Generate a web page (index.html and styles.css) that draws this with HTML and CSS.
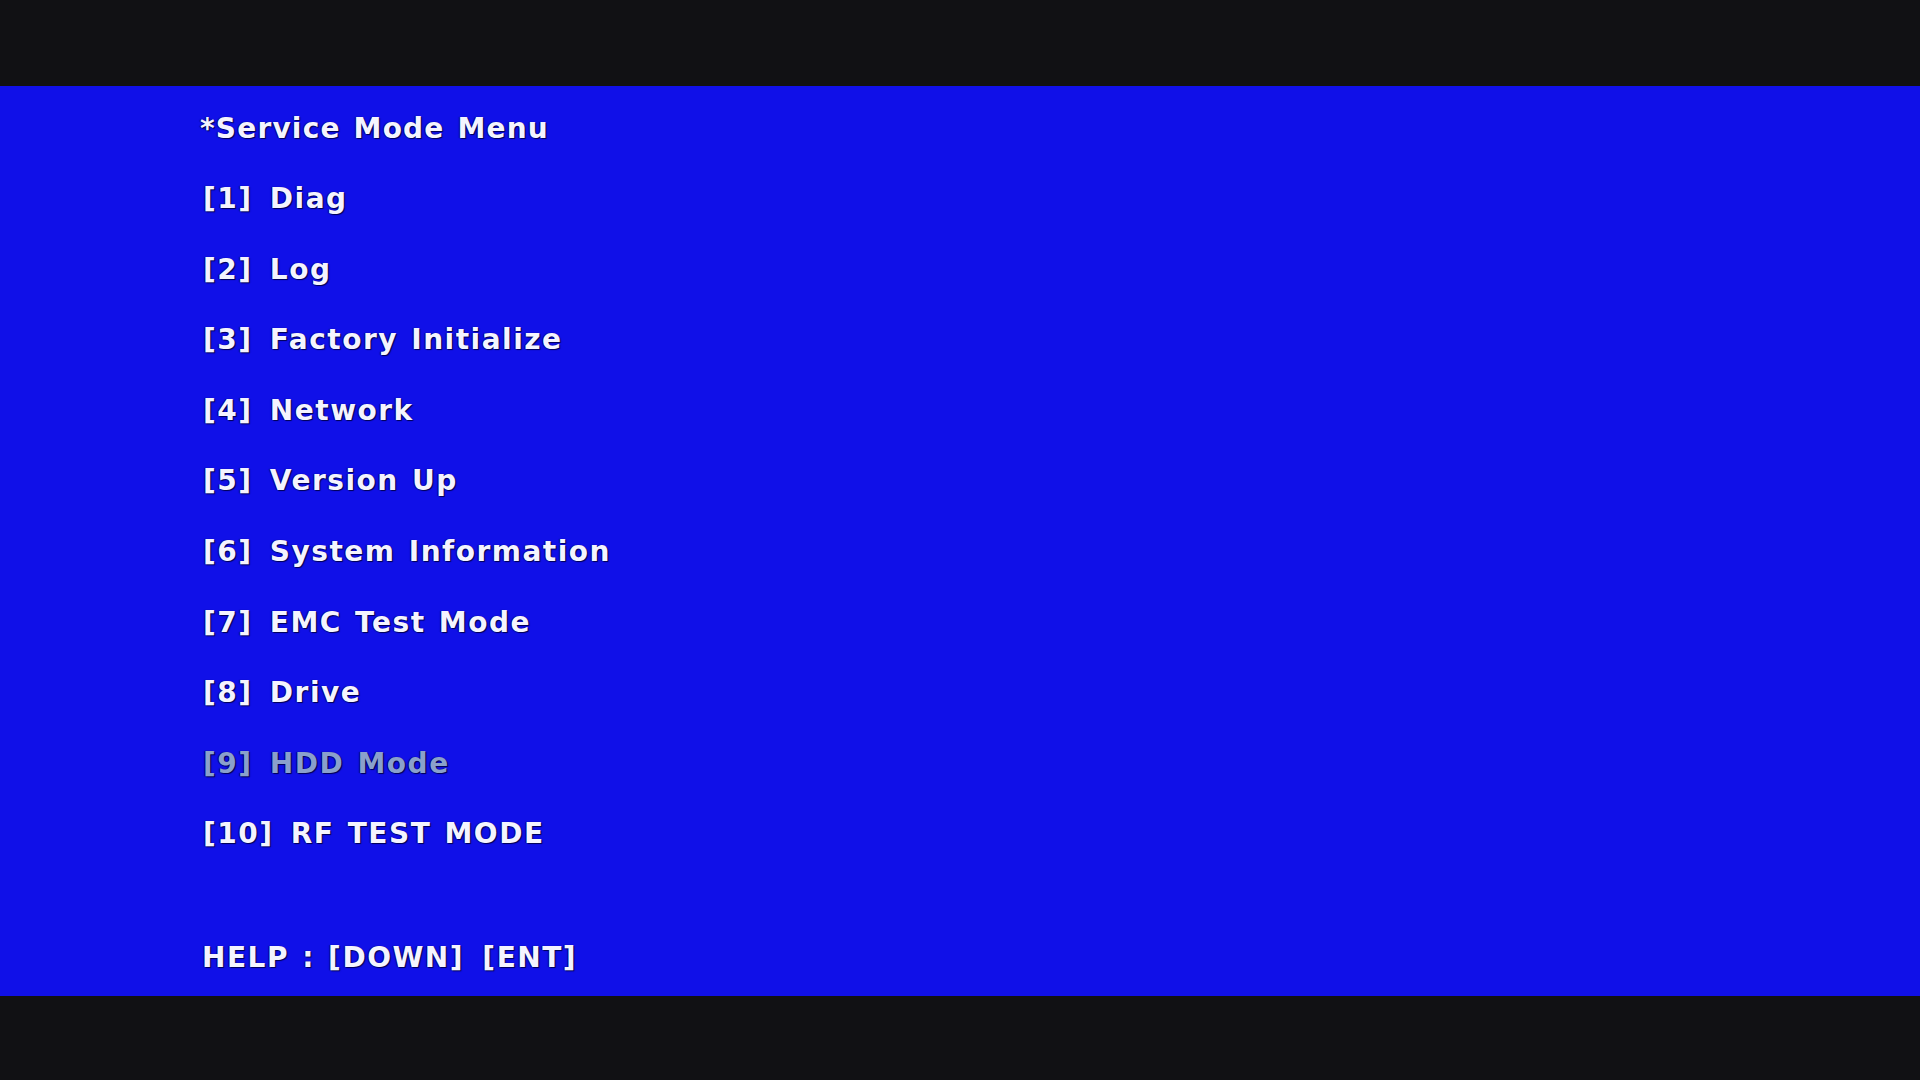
FILE: index.html
```html
<!DOCTYPE html>
<html>
<head>
<meta charset="utf-8">
<link rel="stylesheet" href="styles.css">
</head>
<body>
<div class="bar"></div>
<main class="screen">
  <div class="title">*Service Mode Menu</div>
  <ul class="menu">
    <li><span class="key">[1]</span> Diag</li>
    <li><span class="key">[2]</span> Log</li>
    <li><span class="key">[3]</span> Factory Initialize</li>
    <li><span class="key">[4]</span> Network</li>
    <li><span class="key">[5]</span> Version Up</li>
    <li><span class="key">[6]</span> System Information</li>
    <li><span class="key">[7]</span> EMC Test Mode</li>
    <li><span class="key">[8]</span> Drive</li>
    <li class="disabled"><span class="key">[9]</span> HDD Mode</li>
    <li><span class="key">[10]</span> RF TEST MODE</li>
  </ul>
  <div class="help">HELP : [DOWN] <span class="key-gap">[ENT]</span></div>
</main>
<div class="bar bottom"></div>
</body>
</html>
```
FILE: styles.css
```css
html, body {
  margin: 0;
  padding: 0;
  background: #111114;
  width: 1920px;
  height: 1080px;
  overflow: hidden;
}
.bar {
  height: 86px;
  background: #111114;
}
.bar.bottom {
  height: 84px;
}
.screen {
  height: 910px;
  background: #1010e8;
  box-sizing: border-box;
  padding: 8px 0 0 200px;
  font-family: "DejaVu Sans", sans-serif;
  font-weight: bold;
  font-size: 28px;
  letter-spacing: 1.5px;
  word-spacing: 2px;
  color: #f4f4ff;
  text-shadow: 1px 1px 1px #000050, -1px 0 1px #000070;
}
.title {
  height: 70px;
  line-height: 70px;
  letter-spacing: 1.2px;
}
.menu {
  list-style: none;
  margin: 0;
  padding: 0 0 0 3px;
}
.menu li {
  height: 70.6px;
  line-height: 70.6px;
}
.key {
  margin-right: 4px;
}
.menu li.disabled {
  color: #8aa0cc;
}
.help {
  margin-top: 53px;
  padding-left: 2px;
  line-height: 70px;
}
.key-gap {
  margin-left: 5px;
}
```
